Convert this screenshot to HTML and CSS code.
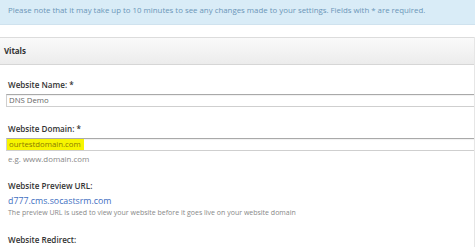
FILE: index.html
```html
<!DOCTYPE html>
<html>
    <head>
        <title>Website Settings</title>
        <link rel="stylesheet" href="styles.css">
    </head>
    <body>
        <div class="notice">Please note that it may take up to 10 minutes to see any changes made to your settings. Fields with * are required.</div>

        <div class="panel">
            <div class="panel-head">Vitals</div>
            <div class="panel-body">
                <div class="field">
                    <label>Website Name: *</label>
                    <div class="input">DNS Demo</div>
                </div>
                <div class="field">
                    <label>Website Domain: *</label>
                    <div class="input"><span class="mark">ourtestdomain.com</span></div>
                    <p class="help">e.g. www.domain.com</p>
                </div>
                <div class="field">
                    <label>Website Preview URL:</label>
                    <a class="preview" href="#">d777.cms.socastsrm.com</a>
                    <p class="help small">The preview URL is used to view your website before it goes live on your website domain</p>
                </div>
                <div class="field">
                    <label>Website Redirect:</label>
                </div>
            </div>
        </div>
    </body>
</html>
```

FILE: styles.css
```css
body {
    margin: 0;
    background: white;
    font-family: 'Open Sans', 'Noto Sans', sans-serif;
    color: #333;
}

.notice {
    height: 25px;
    line-height: 20px;
    padding-left: 8px;
    background: #d9ecf7;
    border-bottom: 1px solid #cfe2ee;
    color: #6b96b8;
    font-size: 7.85px;
    box-sizing: border-box;
    white-space: nowrap;
}

.panel {
    margin-top: 12px;
    border-right: 1px solid #e6e6e6;
}

.panel-head {
    height: 28px;
    line-height: 26px;
    padding-left: 4px;
    box-sizing: border-box;
    border-top: 1px solid #dcdcdc;
    border-bottom: 1px solid #d6d6d6;
    background: linear-gradient(#fafafa, #ececec);
    font-size: 8px;
    font-weight: 700;
    letter-spacing: -0.1px;
    color: #333;
}

.panel-body {
    padding: 13px 0 0 6px;
}

.field {
    margin-bottom: 15px;
}

label {
    display: block;
    padding-left: 2px;
    font-size: 8.1px;
    font-weight: 600;
    line-height: 14px;
    color: #333;
    margin-bottom: 2px;
}

.input {
    height: 13px;
    box-sizing: border-box;
    border: 1px solid #cfcfcf;
    border-top-color: #a9a9a9;
    border-right: none;
    box-shadow: inset 0 1px 1px rgba(0, 0, 0, 0.06);
    font-size: 7.8px;
    line-height: 11px;
    color: #666;
    padding-left: 2px;
}

.mark {
    display: inline-block;
    margin-left: -2px;
    padding: 0 3px 0 2px;
    height: 11px;
    background: #f7f500;
    color: #8a7a00;
}

.help {
    margin: 3px 0 0 2px;
    font-size: 7.9px;
    line-height: 10px;
    color: #888;
}

.preview {
    display: block;
    padding-left: 2px;
    font-size: 8.8px;
    line-height: 13px;
    color: #3f6fbf;
    text-decoration: none;
}

.preview + .help {
    margin-top: 0;
}

.small {
    font-size: 7px;
}
```
